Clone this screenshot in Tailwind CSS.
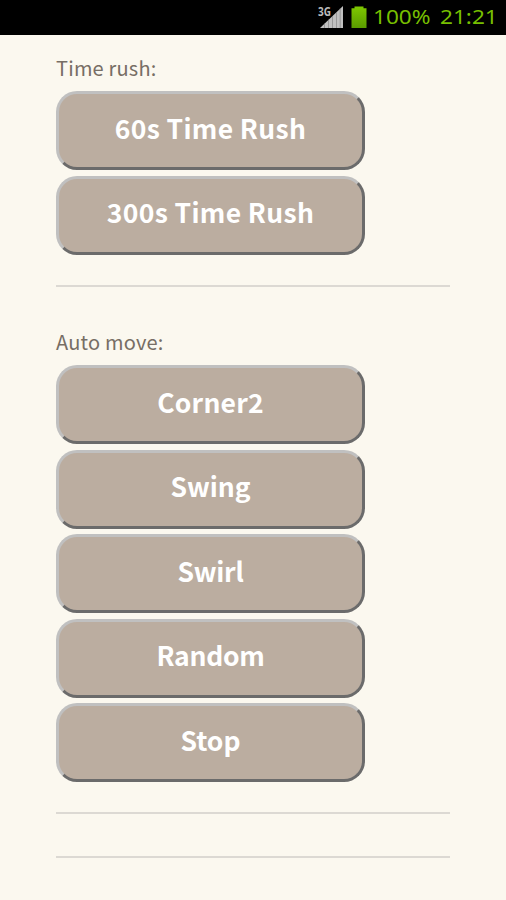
<!DOCTYPE html>
<html lang="en">
<head>
<meta charset="utf-8">
<title>Time rush</title>
<script src="https://cdn.jsdelivr.net/npm/@tailwindcss/browser@4"></script>
</head>
<body class="h-[900px] overflow-hidden bg-[#fbf8ef] font-['Noto_Sans_CJK_SC','Noto_Sans',sans-serif] text-[#776e65]">
<header class="flex h-[35px] items-center bg-black pl-[317px] font-['Noto_Sans',sans-serif] text-[20px] text-[#77bf00]">
  <svg class="h-[35px] w-[27px] shrink-0" viewBox="0 0 27 35">
    <path d="M3 28L26 6V28Z" fill="#c0c0c0"/>
    <path d="M7.5 23.5V28M11.5 19.7V28M15.5 16V28M19.5 12V28M23.2 8.5V28" stroke="#858585" stroke-width=".7"/>
    <text x="1" y="16" font-family="Noto Sans" font-size="12" font-weight="700" fill="#bbb" stroke="#000" stroke-width="1.5" paint-order="stroke" textLength="13" lengthAdjust="spacingAndGlyphs">3G</text>
  </svg>
  <svg class="ml-[7px] h-[35px] w-4 shrink-0" viewBox="0 0 16 35">
    <defs><linearGradient id="charge" x2="0" y2="1"><stop stop-color="#7fc800"/><stop offset="1" stop-color="#5a9c00"/></linearGradient></defs>
    <path d="M.5 8.2H3.5V6.5H12.5V8.2H15.5V28H.5Z" fill="url(#charge)"/>
  </svg>
  <span class="ml-[6px] w-[67px] origin-left scale-x-[1.13] pb-[2px] whitespace-nowrap">100%</span>
  <span class="origin-left scale-x-[1.13] pb-[2px] whitespace-nowrap">21:21</span>
</header>
<main class="ml-[56px] w-[394px]">
  <section class="h-[252px] border-b-2 border-[#dcd9d3] pt-[18px]">
    <h2 class="h-[38.4px] text-[20px] leading-[30px] tracking-[.2px]">Time rush:</h2>
    <div class="flex w-[309px] flex-col gap-[5.4px] text-[26.5px] font-bold tracking-[.35px] text-white">
      <button class="h-[79px] rounded-[21px] border-3 border-t-[#c0c0c0] border-r-[#6b6b6b] border-b-[#6b6b6b] border-l-[#c0c0c0] bg-[#bbada0] pb-1.5">60s Time Rush</button>
      <button class="h-[79px] rounded-[21px] border-3 border-t-[#c0c0c0] border-r-[#6b6b6b] border-b-[#6b6b6b] border-l-[#c0c0c0] bg-[#bbada0] pb-1.5">300s Time Rush</button>
    </div>
  </section>
  <section class="h-[527px] border-b-2 border-[#dcd9d3] pt-[40px]">
    <h2 class="h-[38.4px] text-[20px] leading-[30px] tracking-[.2px]">Auto move:</h2>
    <div class="flex w-[309px] flex-col gap-[5.4px] text-[26.5px] font-bold text-white">
      <button class="h-[79px] rounded-[21px] border-3 border-t-[#c0c0c0] border-r-[#6b6b6b] border-b-[#6b6b6b] border-l-[#c0c0c0] bg-[#bbada0] pb-1.5 tracking-[.2px]">Corner2</button>
      <button class="h-[79px] rounded-[21px] border-3 border-t-[#c0c0c0] border-r-[#6b6b6b] border-b-[#6b6b6b] border-l-[#c0c0c0] bg-[#bbada0] pb-1.5 tracking-[-.1px]">Swing</button>
      <button class="h-[79px] rounded-[21px] border-3 border-t-[#c0c0c0] border-r-[#6b6b6b] border-b-[#6b6b6b] border-l-[#c0c0c0] bg-[#bbada0] pb-1.5 tracking-[-.3px]">Swirl</button>
      <button class="h-[79px] rounded-[21px] border-3 border-t-[#c0c0c0] border-r-[#6b6b6b] border-b-[#6b6b6b] border-l-[#c0c0c0] bg-[#bbada0] pb-1.5 tracking-[-.3px]">Random</button>
      <button class="h-[79px] rounded-[21px] border-3 border-t-[#c0c0c0] border-r-[#6b6b6b] border-b-[#6b6b6b] border-l-[#c0c0c0] bg-[#bbada0] pb-1.5">Stop</button>
    </div>
  </section>
  <hr class="mt-[42px] border-t-2 border-[#dcd9d3]">
</main>
</body>
</html>
